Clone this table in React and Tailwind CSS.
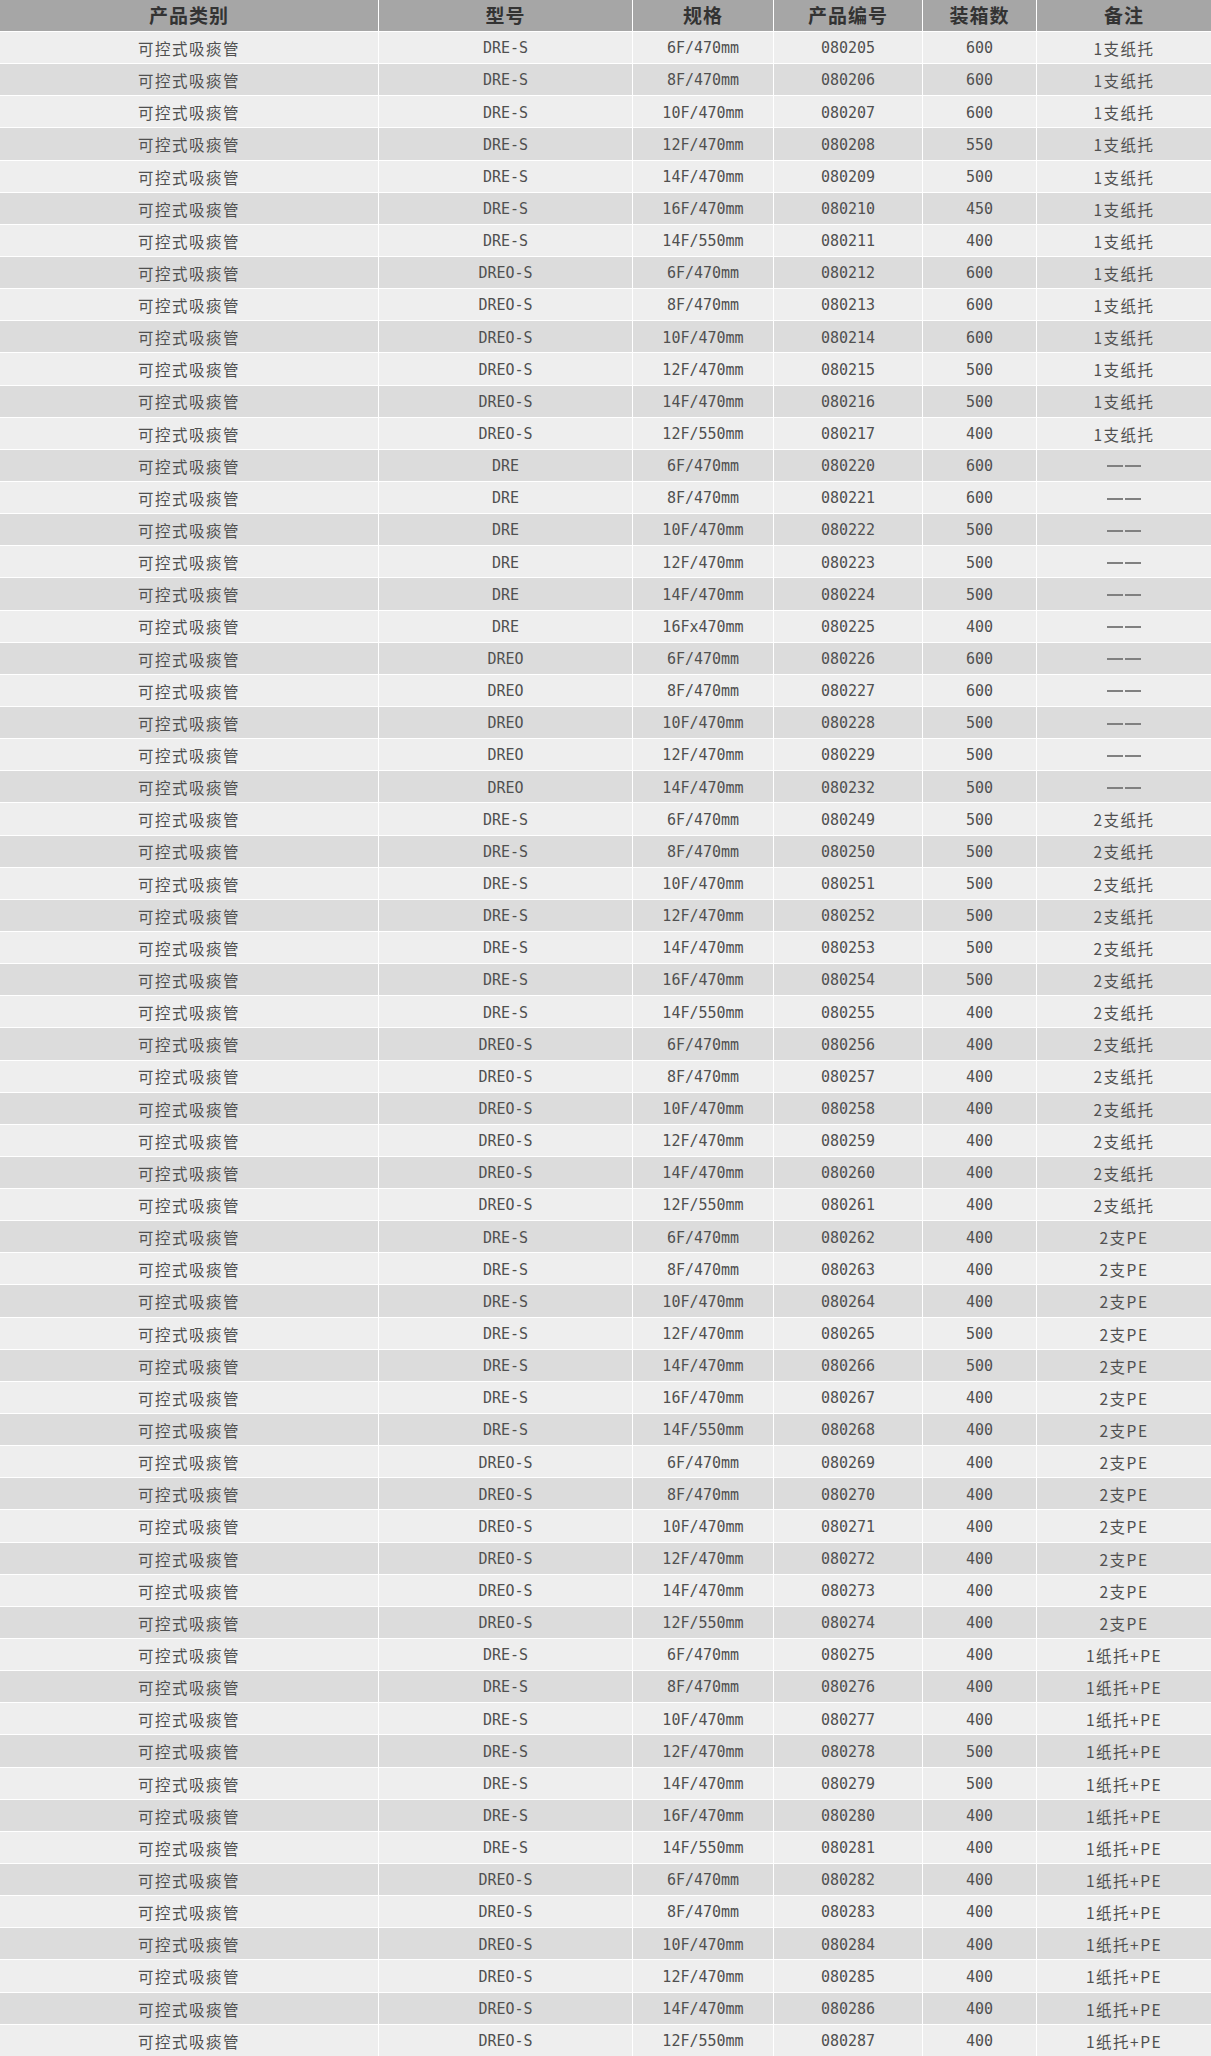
const SPECS = ['6F/470mm', '8F/470mm', '10F/470mm', '12F/470mm', '14F/470mm', '16F/470mm', '14F/550mm']
const SPECS_O = ['6F/470mm', '8F/470mm', '10F/470mm', '12F/470mm', '14F/470mm', '12F/550mm']

function block(model, specs, startCode, qtys, note) {
	return specs.map((spec, i) => ({
		model,
		spec,
		code: '0' + String(startCode + i),
		qty: qtys[i],
		note,
	}))
}

const rows = [
	...block('DRE-S', SPECS, 80205, [600, 600, 600, 550, 500, 450, 400], '1支纸托'),
	...block('DREO-S', SPECS_O, 80212, [600, 600, 600, 500, 500, 400], '1支纸托'),
	...block('DRE', ['6F/470mm', '8F/470mm', '10F/470mm', '12F/470mm', '14F/470mm', '16Fx470mm'], 80220, [600, 600, 500, 500, 500, 400], '——'),
	...block('DREO', ['6F/470mm', '8F/470mm', '10F/470mm', '12F/470mm'], 80226, [600, 600, 500, 500], '——'),
	{ model: 'DREO', spec: '14F/470mm', code: '080232', qty: 500, note: '——' },
	...block('DRE-S', SPECS, 80249, [500, 500, 500, 500, 500, 500, 400], '2支纸托'),
	...block('DREO-S', SPECS_O, 80256, [400, 400, 400, 400, 400, 400], '2支纸托'),
	...block('DRE-S', SPECS, 80262, [400, 400, 400, 500, 500, 400, 400], '2支PE'),
	...block('DREO-S', SPECS_O, 80269, [400, 400, 400, 400, 400, 400], '2支PE'),
	...block('DRE-S', SPECS, 80275, [400, 400, 400, 500, 500, 400, 400], '1纸托+PE'),
	...block('DREO-S', SPECS_O, 80282, [400, 400, 400, 400, 400, 400], '1纸托+PE'),
]

const cols = 'grid grid-cols-[378px_253px_140px_148px_113px_1fr] gap-x-px'
const cell = 'flex items-center justify-center pt-[2px]'
const latin = 'font-["DejaVu_Sans_Mono","Noto_Sans_CJK_SC",monospace] text-[15px]'
const cjk = 'font-["Noto_Sans_CJK_SC","Liberation_Sans",sans-serif] text-[15.5px] tracking-[1.5px]'

export default function App() {
	return (
		<div className="w-[1211px] h-[2056px] bg-white flex flex-col gap-y-px overflow-hidden">
			<div className={`${cols} h-[31px] shrink-0`}>
				{['产品类别', '型号', '规格', '产品编号', '装箱数', '备注'].map(h => (
					<div key={h} className='bg-[#a6a6a6] flex items-center justify-center text-[#333] font-bold text-[19px] tracking-[1px] font-["Noto_Sans_CJK_SC",sans-serif]'>
						{h}
					</div>
				))}
			</div>
			{rows.map((r, i) => (
				<div key={r.code} className={`${cols} flex-1 ${i % 2 === 0 ? '*:bg-[#eeeeee]' : '*:bg-[#dcdcdc]'} text-[#505050]`}>
					<div className={`${cell} ${cjk}`}>可控式吸痰管</div>
					<div className={`${cell} ${latin}`}>{r.model}</div>
					<div className={`${cell} ${latin}`}>{r.spec}</div>
					<div className={`${cell} ${latin}`}>{r.code}</div>
					<div className={`${cell} ${latin}`}>{r.qty}</div>
					{r.note === '——' ? (
						<div className={cell}>
							<span className="flex gap-[2px]">
								<span className="w-4 h-[2px] bg-[#808080]" />
								<span className="w-4 h-[2px] bg-[#808080]" />
							</span>
						</div>
					) : (
						<div className={`${cell} ${cjk}`}>{r.note}</div>
					)}
				</div>
			))}
		</div>
	)
}
